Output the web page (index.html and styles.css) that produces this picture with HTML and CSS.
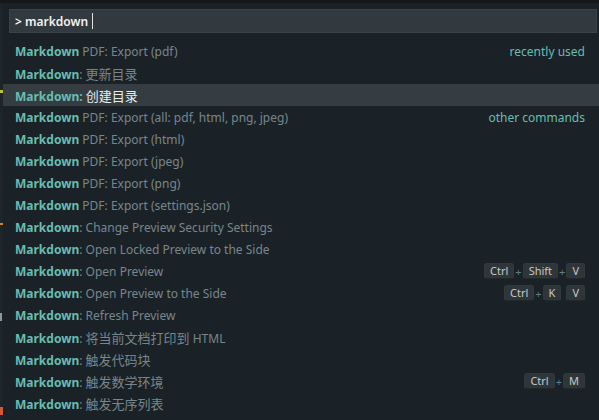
FILE: index.html
```html
<!DOCTYPE html>
<html>
<head>
<meta charset="utf-8">
<link rel="stylesheet" href="styles.css">
</head>
<body>
<div class="topbar"></div>
<div class="main">
  <div class="editor">
    <span class="mark m1"></span>
    <span class="mark m2"></span>
    <span class="mark m3"></span>
    <span class="mark m4"></span>
  </div>
  <div class="widget">
    <div class="input"><span class="query">&gt; markdown</span><span class="cursor"></span></div>
    <ul class="list">
      <li class="row"><span class="label"><b>Markdown</b> PDF: Export (pdf)</span><span class="group">recently used</span></li>
      <li class="row"><span class="label"><b>Markdown</b>: <span class="cjk">更新目录</span></span></li>
      <li class="row selected"><span class="label"><b>Markdown:</b> <span class="cjk">创建目录</span></span></li>
      <li class="row"><span class="label"><b>Markdown</b> PDF: Export (all: pdf, html, png, jpeg)</span><span class="group">other commands</span></li>
      <li class="row"><span class="label"><b>Markdown</b> PDF: Export (html)</span></li>
      <li class="row"><span class="label"><b>Markdown</b> PDF: Export (jpeg)</span></li>
      <li class="row"><span class="label"><b>Markdown</b> PDF: Export (png)</span></li>
      <li class="row"><span class="label"><b>Markdown</b> PDF: Export (settings.json)</span></li>
      <li class="row"><span class="label"><b>Markdown</b>: Change Preview Security Settings</span></li>
      <li class="row"><span class="label"><b>Markdown</b>: Open Locked Preview to the Side</span></li>
      <li class="row"><span class="label"><b>Markdown</b>: Open Preview</span><span class="keys"><kbd>Ctrl</kbd><i>+</i><kbd>Shift</kbd><i>+</i><kbd>V</kbd></span></li>
      <li class="row"><span class="label"><b>Markdown</b>: Open Preview to the Side</span><span class="keys"><kbd>Ctrl</kbd><i>+</i><kbd>K</kbd><kbd class="chord">V</kbd></span></li>
      <li class="row"><span class="label"><b>Markdown</b>: Refresh Preview</span></li>
      <li class="row"><span class="label"><b>Markdown</b>: <span class="cjk">将当前文档打印到</span> HTML</span></li>
      <li class="row"><span class="label"><b>Markdown</b>: <span class="cjk">触发代码块</span></span></li>
      <li class="row"><span class="label"><b>Markdown</b>: <span class="cjk">触发数学环境</span></span><span class="keys"><kbd>Ctrl</kbd><i>+</i><kbd>M</kbd></span></li>
      <li class="row"><span class="label"><b>Markdown</b>: <span class="cjk">触发无序列表</span></span></li>
    </ul>
  </div>
</div>
</body>
</html>
```

FILE: styles.css
```css
html, body {
  margin: 0;
  padding: 0;
}
body {
  width: 599px;
  height: 420px;
  overflow: hidden;
  background: #1b2227;
  font-family: "Noto Sans", "Noto Sans CJK SC", sans-serif;
  font-size: 12px;
}
.topbar {
  height: 3px;
  background: #14181b;
}
.main {
  display: flex;
  height: 417px;
}
.editor {
  width: 3px;
  flex: none;
  background: #1e2529;
  position: relative;
}
.mark {
  position: absolute;
  left: 0;
  width: 3px;
  height: 3px;
}
.m1 { top: 87px; background: #b8c23a; }
.m2 { top: 220px; height: 2px; background: #d08a2a; }
.m3 { top: 310px; background: #8a97a0; height: 8px; width: 2px; }
.m4 { top: 404px; background: #d25a3a; height: 8px; }
.widget {
  flex: 1;
  display: flex;
  flex-direction: column;
  padding: 6px 2px 0 0;
}
.input {
  margin-left: 6px;
  height: 22px;
  background: #323a3f;
  border: 1px solid #3a4348;
  display: flex;
  align-items: center;
  padding-left: 5px;
  color: #f2f2f2;
}
.query {
  font-size: 12px;
  font-weight: 600;
}
.cursor {
  width: 1px;
  height: 16px;
  background: #e0e0e0;
  margin-left: 4px;
}
.list {
  list-style: none;
  margin: 7px -2px 0 0;
  padding: 0;
}
.row {
  height: 22px;
  display: flex;
  align-items: center;
  justify-content: space-between;
  padding: 0 14px 0 12px;
  color: #78868c;
  white-space: nowrap;
}
.row b {
  color: #68bdb1;
  font-weight: 700;
}
.cjk {
  font-size: 13px;
}
.row.selected {
  background: #353d42;
  color: #ececec;
}
.group {
  color: #68bdb1;
}
.keys {
  display: flex;
  align-items: center;
}
kbd {
  font-family: "Noto Sans", sans-serif;
  font-size: 11px;
  line-height: 14px;
  color: #c8c8c8;
  background: #2f3639;
  border: 1px solid #32393d;
  border-bottom: 1px solid #22282b;
  border-radius: 3px;
  padding: 0 5px;
}
.keys i {
  font-style: normal;
  color: #5d7d88;
  font-size: 11px;
  margin: 0 1px;
}
kbd.chord {
  margin-left: 5px;
}
```
